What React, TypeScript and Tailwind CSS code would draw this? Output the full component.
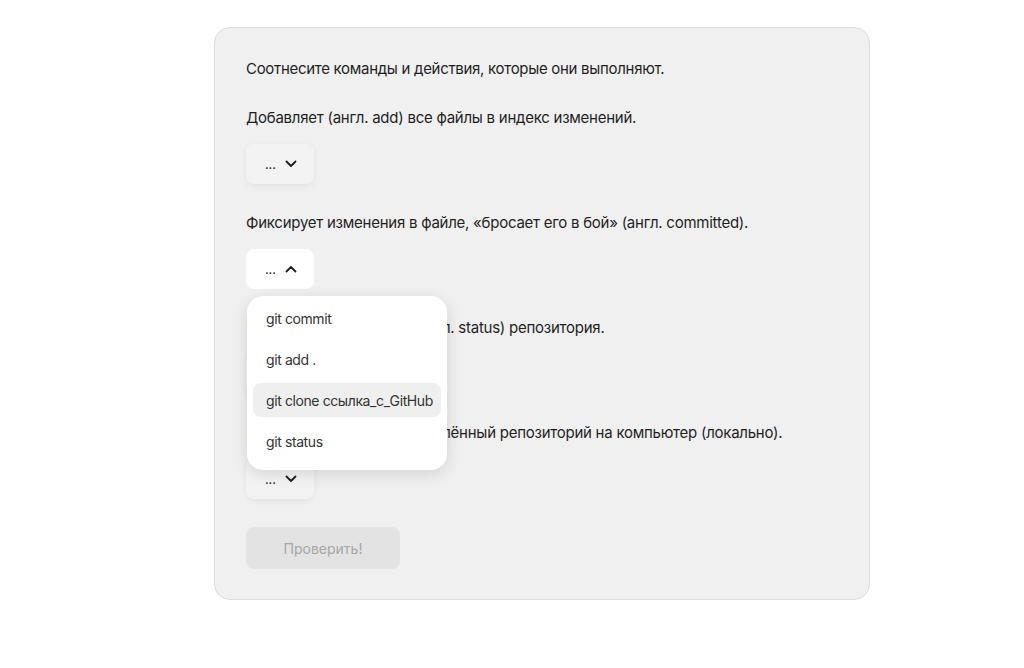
import React from "react";

const ChevronDown = () => (
  <svg width="12" height="8" viewBox="0 0 12 8" fill="none">
    <path d="M1.5 1.5L6 6L10.5 1.5" stroke="#1f1f1f" strokeWidth="1.8" strokeLinecap="round" strokeLinejoin="round" />
  </svg>
);

const ChevronUp = () => (
  <svg width="12" height="8" viewBox="0 0 12 8" fill="none">
    <path d="M1.5 6.5L6 2L10.5 6.5" stroke="#1f1f1f" strokeWidth="1.8" strokeLinecap="round" strokeLinejoin="round" />
  </svg>
);

const options = ["git commit", "git add .", "git clone ссылка_с_GitHub", "git status"];

const Select = ({ open = false }: { open?: boolean }) => {
  return (
    <div className="relative">
      <button
        className={
          "flex h-10 w-[68px] items-center justify-center gap-[9px] rounded-lg pl-[2px] text-[13px] text-[#1f1f1f] " +
          (open ? "bg-white" : "bg-[#f3f3f3] shadow-[0_2px_6px_rgba(0,0,0,0.06)]")
        }
      >
        <span className="pt-[1px]">...</span>
        {open ? <ChevronUp /> : <ChevronDown />}
      </button>
      {open && (
        <div className="absolute left-px top-[47px] z-10 w-[200px] rounded-2xl bg-white px-[6px] pb-[12px] pt-[5px] shadow-[0_4px_16px_rgba(0,0,0,0.12)]">
          {options.map((o, i) => (
            <div
              key={o}
              className={
                "flex h-[34px] items-center whitespace-nowrap rounded-lg px-[13px] text-[14px] tracking-[-0.4px] text-[#333333] " +
                (i > 0 ? "mt-[7px] " : "") +
                (i === 2 ? "bg-[#efefef]" : "")
              }
            >
              {o}
            </div>
          ))}
        </div>
      )}
    </div>
  );
};

const questions = [
  "Добавляет (англ. add) все файлы в индекс изменений.",
  "Фиксирует изменения в файле, «бросает его в бой» (англ. committed).",
  "Показывает состояние (англ. status) репозитория.",
  "Клонирует (англ. clone) удалённый репозиторий на компьютер (локально).",
];

export default function App() {
  return (
    <div className="min-h-screen bg-white pt-[27px] font-['Inter',sans-serif] text-[#1f1f1f]">
      <div className="ml-[214px] w-[656px] rounded-2xl border border-[#dcdcdc] bg-[#f0f0f0] px-[31px] pb-[30px] pt-[31px]">
        <p className="text-[15px] leading-5 tracking-[-0.3px]">
          Соотнесите команды и действия, которые они выполняют.
        </p>
        {questions.map((q, i) => (
          <div key={q} className="mt-[29px]">
            <p className="text-[15px] leading-5 tracking-[-0.25px]">{q}</p>
            <div className="mt-4">
              <Select open={i === 1} />
            </div>
          </div>
        ))}
        <button className="mt-[28px] h-[42px] w-[154px] rounded-lg bg-[#e3e3e3] text-[14px] text-[#a6a6a6]">
          Проверить!
        </button>
      </div>
    </div>
  );
}
